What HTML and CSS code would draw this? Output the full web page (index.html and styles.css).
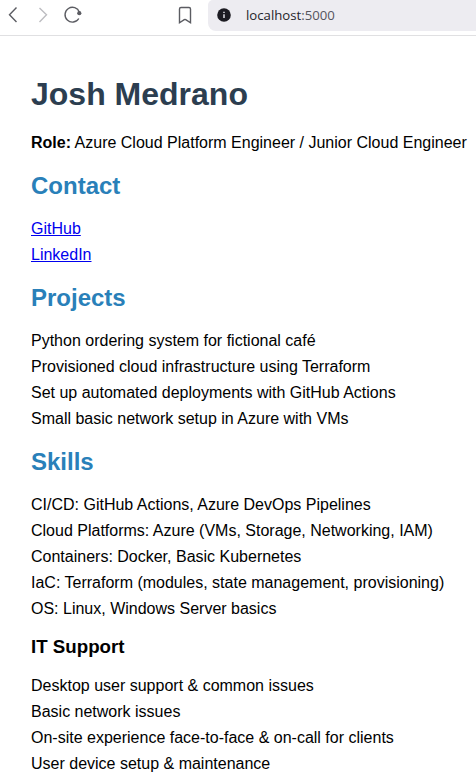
FILE: index.html
```html
<!DOCTYPE html>
<html lang="en">
<head>
<meta charset="utf-8">
<title>Josh Medrano</title>
<link rel="stylesheet" href="styles.css">
</head>
<body>
<header class="toolbar">
  <svg class="back" width="24" height="30" viewBox="0 0 24 30"><path d="M16.5 7.500L9.500 14.800L16.500 22"/></svg>
  <svg class="forward" width="30" height="30" viewBox="0 0 30 30"><path d="M15.500 8L22.500 14.800L15.500 22"/></svg>
  <svg class="reload" width="30" height="30" viewBox="0 0 30 30"><path d="M24.800 18.500A7.400 7.400 0 1 1 25.400 12.200"/><circle cx="25.300" cy="13.200" r="2.100"/></svg>
  <svg class="bookmark" width="14" height="20" viewBox="0 0 14 20"><path d="M3 2.500H11Q12.500 2.500 12.500 4V17.800L7.700 14.700Q7 14.300 6.300 14.700L1.500 17.800V4Q1.500 2.500 3 2.500Z"/></svg>
  <div class="address">
    <svg width="14" height="14" viewBox="0 0 14 14"><circle cx="7" cy="7" r="6.800"/><path d="M7 6.200V10M7 3.700V5"/></svg>
    <span>localhost<span class="port">:5000</span></span>
  </div>
</header>
<main class="page">
  <h1>Josh Medrano</h1>
  <p class="role"><strong>Role:</strong> Azure Cloud Platform Engineer / Junior Cloud Engineer</p>
  <h2>Contact</h2>
  <ul>
    <li><a href="#">GitHub</a></li>
    <li><a href="#">LinkedIn</a></li>
  </ul>
  <h2>Projects</h2>
  <ul>
    <li>Python ordering system for fictional café</li>
    <li>Provisioned cloud infrastructure using Terraform</li>
    <li>Set up automated deployments with GitHub Actions</li>
    <li>Small basic network setup in Azure with VMs</li>
  </ul>
  <h2>Skills</h2>
  <ul>
    <li>CI/CD: GitHub Actions, Azure DevOps Pipelines</li>
    <li>Cloud Platforms: Azure (VMs, Storage, Networking, IAM)</li>
    <li>Containers: Docker, Basic Kubernetes</li>
    <li>IaC: Terraform (modules, state management, provisioning)</li>
    <li>OS: Linux, Windows Server basics</li>
  </ul>
  <h3>IT Support</h3>
  <ul>
    <li>Desktop user support &amp; common issues</li>
    <li>Basic network issues</li>
    <li>On-site experience face-to-face &amp; on-call for clients</li>
    <li>User device setup &amp; maintenance</li>
  </ul>
</main>
</body>
</html>
```

FILE: styles.css
```css
body { margin: 0; height: 780px; overflow: hidden; background: #fff; color: #000; font: 16px "Liberation Sans", Arial, sans-serif; }
.toolbar { display: flex; box-sizing: border-box; height: 36px; border-bottom: 1px solid #e0e0e2; }
.toolbar svg { fill: none; stroke: #5b5c62; stroke-width: 1.400; flex: none; }
.toolbar .forward { stroke: #bdbdc1; }
.toolbar .reload circle { fill: #5b5c62; stroke: none; }
.toolbar .bookmark { margin: 5px 16px 0 94px; }
.address { flex: 1; display: flex; align-items: center; gap: 15px; height: 31px; box-sizing: border-box; padding: 0 0 1px 9px; background: #edecf1; border-radius: 5px 0 0 8px; font: 13.200px "Open Sans", sans-serif; color: #25252b; }
.address .port { color: #55555d; }
.toolbar .address circle { fill: #1c1b22; stroke: none; }
.toolbar .address path { stroke: #edecf1; }
.page { padding: 32px 0 0 31px; white-space: nowrap; }
h1 { margin: 0; font-size: 32px; line-height: 52px; color: #2c3e50; }
p { margin: 10px 0 0; line-height: 26px; }
h2 { margin: 11px 0; font-size: 24px; line-height: 38px; color: #2980b9; }
h3 { margin: 9px 0 11px; font-size: 18.720px; line-height: 31px; }
ul { margin: 0; padding: 0; list-style: none; line-height: 26px; }
a { color: #0000ee; }
```
